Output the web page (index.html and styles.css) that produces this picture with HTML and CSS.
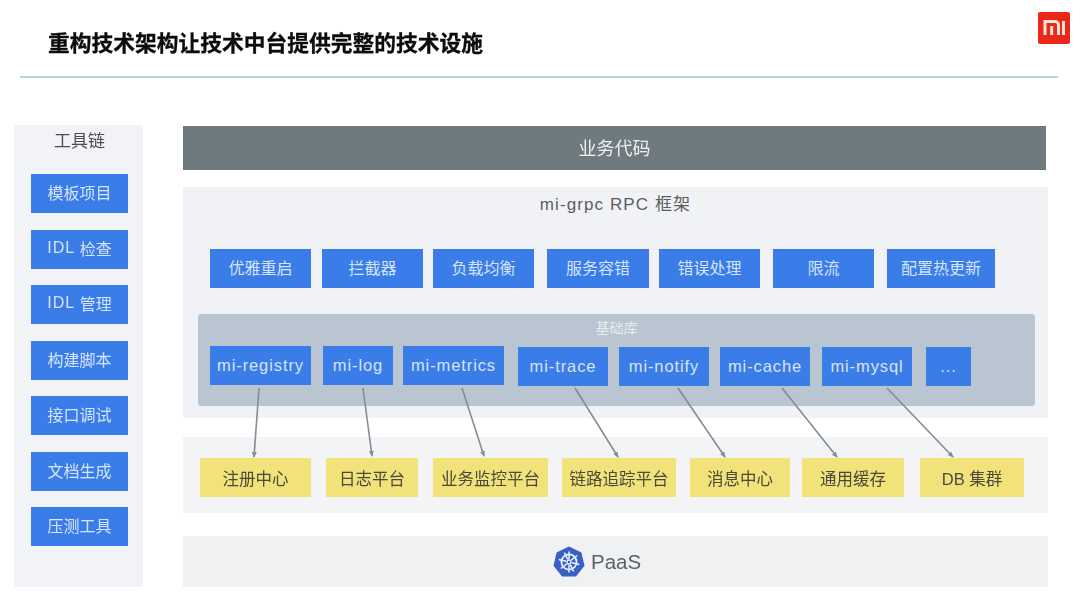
FILE: index.html
```html
<!DOCTYPE html>
<html lang="zh-CN">
<head>
<meta charset="utf-8">
<title>技术中台</title>
<link rel="stylesheet" href="styles.css">
</head>
<body>
<div class="slide">
  <header class="header">
    <h1 class="title">重构技术架构让技术中台提供完整的技术设施</h1>
    <svg class="mi-logo" viewBox="0 0 32 32" aria-label="mi">
      <rect width="32" height="32" rx="2" fill="#e9281b"/>
      <path d="M7 23V9.5h10a3.5 3.5 0 0 1 3.5 3.5v10M13.7 14v9M25.5 9v14" fill="none" stroke="#fbe3d6" stroke-width="3"/>
    </svg>
  </header>
  <div class="content">
    <aside class="sidebar">
      <div class="side-title">工具链</div>
      <div class="side-list">
        <div class="box side-item">模板项目</div>
        <div class="box side-item"><span class="latin">IDL</span>&nbsp;检查</div>
        <div class="box side-item"><span class="latin">IDL</span>&nbsp;管理</div>
        <div class="box side-item">构建脚本</div>
        <div class="box side-item">接口调试</div>
        <div class="box side-item">文档生成</div>
        <div class="box side-item">压测工具</div>
      </div>
    </aside>
    <main class="main">
      <div class="biz">业务代码</div>
      <section class="framework">
        <div class="fw-title">mi-grpc RPC 框架</div>
        <div class="features">
          <div class="box">优雅重启</div>
          <div class="box">拦截器</div>
          <div class="box">负载均衡</div>
          <div class="box">服务容错</div>
          <div class="box">错误处理</div>
          <div class="box">限流</div>
          <div class="box">配置热更新</div>
        </div>
        <div class="base">
          <div class="base-title">基础库</div>
          <div class="libs">
            <div class="box">mi-registry</div>
            <div class="box">mi-log</div>
            <div class="box">mi-metrics</div>
            <div class="box">mi-trace</div>
            <div class="box">mi-notify</div>
            <div class="box">mi-cache</div>
            <div class="box">mi-mysql</div>
            <div class="box">...</div>
          </div>
        </div>
      </section>
      <section class="services">
        <div class="svc">注册中心</div>
        <div class="svc">日志平台</div>
        <div class="svc">业务监控平台</div>
        <div class="svc">链路追踪平台</div>
        <div class="svc">消息中心</div>
        <div class="svc">通用缓存</div>
        <div class="svc">DB 集群</div>
      </section>
      <section class="paas">
        <svg class="k8s" viewBox="0 0 32 32" aria-label="Kubernetes">
          <path d="M16 0.5 28.4 6.4 31.5 19.8 22.9 30.6H9.1L0.5 19.8 3.6 6.4Z" fill="#3a5fc4"/>
          <g fill="none" stroke="#e8f1fb">
            <circle cx="16" cy="16" r="7.6" stroke-width="1.8"/>
            <circle cx="16" cy="16" r="2" stroke-width="1.4"/>
            <path stroke-width="1.5" d="M16 5.5V13M16 19V26.5M24.2 9.5 18.3 14.2M13.7 17.8 7.8 22.5M26.3 18.4 19 16.7M13 15.3 5.7 13.6M20.6 25.5 17.3 18.7M14.7 13.3 11.4 6.5"/>
          </g>
        </svg>
        <span class="paas-text">PaaS</span>
      </section>
    </main>
  </div>
  <svg class="arrows" viewBox="0 0 1080 608" aria-hidden="true">
    <defs>
      <marker id="head" viewBox="0 0 6 6" refX="5" refY="3" markerUnits="userSpaceOnUse" markerWidth="6" markerHeight="6" orient="auto">
        <path d="M0 0.5 6 3 0 5.5Z" fill="#868c93"/>
      </marker>
    </defs>
    <g stroke="#868c93" stroke-width="1.6">
      <line x1="259" y1="388" x2="254" y2="457" marker-end="url(#head)"/>
      <line x1="363" y1="388" x2="372" y2="456" marker-end="url(#head)"/>
      <line x1="462" y1="388" x2="484" y2="456" marker-end="url(#head)"/>
      <line x1="575" y1="388" x2="618" y2="457" marker-end="url(#head)"/>
      <line x1="678" y1="388" x2="725" y2="457" marker-end="url(#head)"/>
      <line x1="782" y1="388" x2="837" y2="457" marker-end="url(#head)"/>
      <line x1="887" y1="388" x2="953" y2="457" marker-end="url(#head)"/>
    </g>
  </svg>
</div>
</body>
</html>
```
FILE: styles.css
```css
* { box-sizing: border-box; }
html, body { margin: 0; padding: 0; background: #fff; }
.slide {
  position: relative;
  width: 1080px;
  height: 608px;
  overflow: hidden;
  font-family: "Liberation Sans", "Noto Sans CJK SC", sans-serif;
  filter: blur(0.4px);
}
.header {
  display: flex;
  justify-content: space-between;
  align-items: flex-start;
  height: 78px;
  margin: 0 22px 0 20px;
  border-bottom: 2px solid #b7d6d8;
}
.title {
  margin: 31px 0 0 28px;
  font-size: 21.75px;
  line-height: 26px;
  font-weight: 700;
  color: #0c0c0c;
  -webkit-text-stroke: 0.3px #0c0c0c;
}
.mi-logo { width: 32px; height: 32px; margin: 12px -12px 0 0; flex: none; }
.content { display: flex; align-items: flex-start; padding: 47px 0 0 14px; }
.sidebar {
  width: 129px;
  height: 462px;
  margin-right: 40px;
  background: #f2f3f6;
  padding: 0 15px 0 17px;
}
.side-title {
  height: 49px;
  padding-top: 6px;
  text-align: center;
  font-size: 17px;
  line-height: 21px;
  color: #4d4d4d;
}
.side-list { display: flex; flex-direction: column; gap: 16.5px; }
.latin { letter-spacing: 1px; }
.box {
  display: flex;
  align-items: center;
  justify-content: center;
  height: 39px;
  background: #3a7de8;
  color: #d5e4fb;
  font-size: 16px;
  white-space: nowrap;
  padding-bottom: 3px;
}
.main { width: 865px; display: flex; flex-direction: column; align-items: flex-start; }
.biz {
  width: 863px;
  height: 44px;
  margin: 1px 0 17px;
  padding-bottom: 3px;
  background: #6f7a7e;
  color: #edf0f0;
  font-size: 18px;
  display: flex;
  align-items: center;
  justify-content: center;
}
.framework {
  width: 865px;
  height: 231px;
  margin-bottom: 19px;
  background: #f1f2f5;
  padding-top: 7px;
  position: relative;
}
.fw-title {
  height: 21px;
  text-align: center;
  font-size: 17px;
  line-height: 21px;
  letter-spacing: 1.1px;
  color: #5a5e63;
}
.features { display: flex; margin: 34px 0 0 27px; }
.features .box { width: 101px; }
.features .box:nth-child(2) { margin-left: 11px; }
.features .box:nth-child(3) { margin-left: 10px; }
.features .box:nth-child(4) { width: 102px; margin-left: 13px; }
.features .box:nth-child(5) { margin-left: 10px; }
.features .box:nth-child(6) { margin-left: 13px; }
.features .box:nth-child(7) { width: 108px; margin-left: 13px; }
.base {
  width: 837px;
  height: 92px;
  margin: 26px 0 0 15px;
  border-radius: 3px;
  background: #b9c5d0;
  padding-top: 6px;
}
.base-title {
  height: 16px;
  text-align: center;
  font-size: 14px;
  line-height: 16px;
  color: #e6ebef;
}
.libs { display: flex; margin: 10px 0 0 12px; }
.libs .box { width: 90px; font-size: 16.5px; letter-spacing: 0.9px; padding-bottom: 0; }
.libs .box:nth-child(1) { width: 101px; }
.libs .box:nth-child(2) { width: 70px; margin-left: 12px; }
.libs .box:nth-child(3) { width: 101px; margin-left: 10px; }
.libs .box:nth-child(4) { margin: 1px 0 -1px 14px; }
.libs .box:nth-child(5) { margin: 1px 0 -1px 11px; }
.libs .box:nth-child(6) { margin: 1px 0 -1px 11px; }
.libs .box:nth-child(7) { margin: 1px 0 -1px 12px; }
.libs .box:nth-child(8) { width: 45px; margin: 1px 0 -1px 14px; }
.services {
  display: flex;
  width: 865px;
  height: 76px;
  margin-bottom: 23px;
  padding: 21px 0 0 17px;
  background: #f3f4f6;
}
.svc {
  display: flex;
  align-items: center;
  justify-content: center;
  height: 39px;
  background: #f2e27a;
  color: #4a4a3a;
  font-size: 16.5px;
  white-space: nowrap;
}
.svc:nth-child(1) { width: 111px; }
.svc:nth-child(2) { width: 92px; margin-left: 15px; }
.svc:nth-child(3) { width: 115px; margin-left: 15px; }
.svc:nth-child(4) { width: 114px; margin-left: 14px; }
.svc:nth-child(5) { width: 100px; margin-left: 14px; }
.svc:nth-child(6) { width: 102px; margin-left: 12px; }
.svc:nth-child(7) { width: 104px; margin-left: 16px; }
.paas {
  display: flex;
  align-items: center;
  width: 865px;
  height: 51px;
  padding: 1px 0 0 370px;
  background: #f0f1f3;
}
.k8s { width: 32px; height: 32px; flex: none; }
.paas-text { margin-left: 6px; font-size: 20.5px; color: #5c6166; }
.arrows { position: absolute; left: 0; top: 0; width: 1080px; height: 608px; pointer-events: none; }
```
